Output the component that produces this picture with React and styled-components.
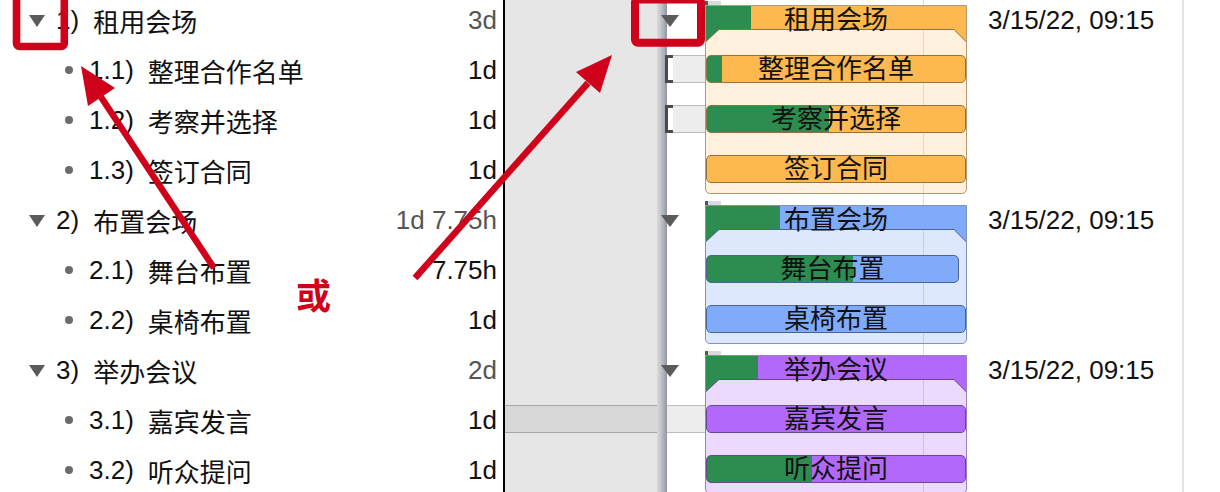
import React from "react";
import styled, { createGlobalStyle } from "styled-components";

const FONT = `"Liberation Sans", "Noto Sans CJK SC", sans-serif`;
const GREEN = "#2d8c4f";
const RED = "#d0021b";

const PALETTE = {
  orange: { bar: "#fdb84f", body: "rgba(253,184,79,0.2)", edge: "#92733f", box: "#b39a70" },
  blue: { bar: "#80abfb", body: "rgba(128,171,251,0.27)", edge: "#4b6390", box: "#7d93bb" },
  purple: { bar: "#b168fb", body: "rgba(177,104,251,0.25)", edge: "#684a8c", box: "#9a7fb8" },
};

const groups = [
  {
    num: "1)", title: "租用会场", dur: "3d", color: "orange", progress: 45, date: "3/15/22, 09:15",
    tasks: [
      { num: "1.1)", title: "整理合作名单", dur: "1d", progress: 15, lead: "bracket" },
      { num: "1.2)", title: "考察并选择", dur: "1d", progress: 122, lead: "bracket" },
      { num: "1.3)", title: "签订合同", dur: "1d", progress: 0 },
    ],
  },
  {
    num: "2)", title: "布置会场", dur: "1d 7.75h", color: "blue", progress: 74, date: "3/15/22, 09:15",
    tasks: [
      { num: "2.1)", title: "舞台布置", dur: "7.75h", progress: 146, width: 253 },
      { num: "2.2)", title: "桌椅布置", dur: "1d", progress: 0 },
    ],
  },
  {
    num: "3)", title: "举办会议", dur: "2d", color: "purple", progress: 52, date: "3/15/22, 09:15",
    tasks: [
      { num: "3.1)", title: "嘉宾发言", dur: "1d", progress: 0, lead: "highlight" },
      { num: "3.2)", title: "听众提问", dur: "1d", progress: 105 },
    ],
  },
];

const GlobalStyle = createGlobalStyle`
  html, body { margin: 0; padding: 0; background: #fff; }
  body { width: 1220px; height: 492px; overflow: hidden; font-family: ${FONT}; }
`;

const Page = styled.div`
  position: relative;
  width: 1220px;
  height: 492px;
  overflow: hidden;
  font-family: ${FONT};
  font-size: 26px;
  color: #111;
`;

const Panes = styled.div`
  display: flex;
  margin-top: -5px;
`;

/* ---------- outline ---------- */
const OutlinePane = styled.div`
  width: 503px;
  flex: none;
  border-right: 2px solid #000;
  display: flex;
  flex-direction: column;
`;

const OutlineRow = styled.div`
  height: 50px;
  display: flex;
  align-items: center;
  padding-left: ${(p) => (p.$child ? 65 : 29)}px;
  padding-right: 6px;
  white-space: nowrap;
`;

const Disclosure = styled.span`
  width: 0;
  height: 0;
  flex: none;
  border-left: 8.5px solid transparent;
  border-right: 8.5px solid transparent;
  border-top: 12px solid #5b5b5b;
  margin-top: 2px;
  margin-right: 11px;
`;

const Bullet = styled.span`
  width: 8px;
  height: 8px;
  flex: none;
  border-radius: 50%;
  background: #6b6b6b;
  margin-right: 16px;
`;

const Num = styled.span`
  margin-right: 14px;
`;

const Title = styled.span``;

const Duration = styled.span`
  margin-left: auto;
  color: ${(p) => (p.$group ? "#555" : "#111")};
`;

/* ---------- splitter ---------- */
const SplitterPane = styled.div`
  width: 162px;
  flex: none;
  display: flex;
  background: #e6e6e6;
`;

const SplitterRows = styled.div`
  flex: 1;
  display: flex;
  flex-direction: column;
`;

const SplitterRow = styled.div`
  height: 50px;
  padding-top: 10px;
  box-sizing: border-box;
`;

const SplitterBand = styled.div`
  height: 28px;
  box-sizing: border-box;
  background: #d8d8d8;
  border-top: 1px solid #a8a8a8;
  border-bottom: 1px solid #a8a8a8;
`;

const SplitterShadow = styled.div`
  width: 10px;
  flex: none;
  background: linear-gradient(to right, #d9dadd 0%, #c3c6cb 35%, #a9aeb5 70%, #90969e 100%);
`;

/* ---------- gantt ---------- */
const GanttPane = styled.div`
  width: 515px;
  flex: none;
  display: flex;
  flex-direction: column;
  background: linear-gradient(
    to right,
    transparent 256px,
    #dcdcdc 256px,
    #dcdcdc 257px,
    transparent 257px
  );
`;

const GroupSection = styled.div`
  display: flex;
  height: ${(p) => p.$rows * 50}px;
`;

const LeadColumn = styled.div`
  width: 38px;
  flex: none;
  display: flex;
  flex-direction: column;
`;

const LeadRow = styled.div`
  height: 50px;
  flex: none;
  box-sizing: border-box;
  padding-top: 10px;
  display: flex;
  align-items: flex-start;
`;

const LeadDisclosure = styled.span`
  width: 0;
  height: 0;
  border-left: 9px solid transparent;
  border-right: 9px solid transparent;
  border-top: 12px solid #5b5b5b;
  margin-left: -6px;
  margin-top: 10px;
`;

const Bracket = styled.span`
  width: 8px;
  height: 28px;
  flex: none;
  box-sizing: border-box;
  border: 3px solid #4a4a4a;
  border-right: none;
  margin-left: -2px;
`;

const LeadBand = styled.span`
  flex: 1;
  height: 28px;
  box-sizing: border-box;
  background: #ededed;
  border-top: 1px solid #bdbdbd;
  border-bottom: 1px solid #bdbdbd;
`;

const BarColumn = styled.div`
  width: 262px;
  flex: none;
  display: flex;
  flex-direction: column;
`;

const GroupTab = styled.div`
  width: 13px;
  height: 4px;
  margin-top: 6px;
  flex: none;
  background: #dadada;
  border-left: 3px solid #555;
`;

const GroupBox = styled.div`
  height: ${(p) => p.$height}px;
  flex: none;
  box-sizing: border-box;
  border: 1px solid ${(p) => p.$c.box};
  border-radius: 0 0 5px 5px;
  background: ${(p) => p.$c.body};
  display: flex;
  flex-direction: column;
`;

const HeaderSlot = styled.div`
  height: 49px;
  flex: none;
  display: grid;
  grid-template-columns: 100%;
  grid-template-rows: 49px;
`;

const HeaderShapeWrap = styled.div`
  grid-area: 1 / 1;
  filter: drop-shadow(0 1px 0 ${(p) => p.$c.edge});
`;

const HeaderShape = styled.div`
  height: 35px;
  clip-path: polygon(0 0, 100% 0, 100% 35px, calc(100% - 12px) 23px, 13px 23px, 0 35px);
  background: linear-gradient(
    to right,
    ${GREEN} ${(p) => p.$progress}px,
    ${(p) => p.$c.bar} ${(p) => p.$progress}px
  );
`;

const HeaderText = styled.div`
  grid-area: 1 / 1;
  position: relative;
  align-self: start;
  height: 27px;
  line-height: 28px;
  text-align: center;
  white-space: nowrap;
`;

const TaskSlot = styled.div`
  height: 50px;
  flex: none;
`;

const TaskBar = styled.div`
  width: ${(p) => p.$width}px;
  height: 28px;
  box-sizing: border-box;
  border: 1px solid ${(p) => p.$c.edge};
  border-radius: 5px;
  background: linear-gradient(
    to right,
    ${GREEN} ${(p) => p.$progress}px,
    ${(p) => p.$c.bar} ${(p) => p.$progress}px
  );
  line-height: 27px;
  text-align: center;
  white-space: nowrap;
`;

const DateColumn = styled.div`
  flex: 1;
  padding-left: 21px;
  line-height: 50px;
  white-space: nowrap;
`;

const RightPane = styled.div`
  flex: 1;
  border-left: 2px solid #e3e3e3;
`;

/* ---------- annotations ---------- */
const Overlay = styled.svg`
  position: absolute;
  left: 0;
  top: 0;
  pointer-events: none;
`;

const OrMark = styled.span`
  position: absolute;
  left: 296px;
  top: 276px;
  font-family: "Noto Sans CJK SC", sans-serif;
  font-size: 35px;
  font-weight: 700;
  line-height: 1;
  color: ${RED};
`;

function Arrow({ tail, base, head }) {
  return (
    <g>
      <line x1={tail[0]} y1={tail[1]} x2={base[0]} y2={base[1]} stroke={RED} strokeWidth="6.5" />
      <polygon points={head.map((p) => p.join(",")).join(" ")} fill={RED} />
    </g>
  );
}

function LeadCell({ kind }) {
  if (kind === "group") {
    return (
      <LeadRow>
        <LeadDisclosure />
      </LeadRow>
    );
  }
  if (kind === "bracket") {
    return (
      <LeadRow>
        <Bracket />
        <LeadBand />
      </LeadRow>
    );
  }
  if (kind === "highlight") {
    return (
      <LeadRow>
        <LeadBand />
      </LeadRow>
    );
  }
  return <LeadRow />;
}

export default function App() {
  const outlineRows = [];
  groups.forEach((g) => {
    outlineRows.push({ ...g, group: true });
    g.tasks.forEach((t) => outlineRows.push(t));
  });

  return (
    <Page>
      <GlobalStyle />
      <Panes>
        <OutlinePane>
          {outlineRows.map((r) => (
            <OutlineRow key={r.num} $child={!r.group}>
              {r.group ? <Disclosure /> : <Bullet />}
              <Num>{r.num}</Num>
              <Title>{r.title}</Title>
              <Duration $group={r.group}>{r.dur}</Duration>
            </OutlineRow>
          ))}
        </OutlinePane>

        <SplitterPane>
          <SplitterRows>
            {outlineRows.map((r) => (
              <SplitterRow key={r.num}>{r.lead === "highlight" && <SplitterBand />}</SplitterRow>
            ))}
          </SplitterRows>
          <SplitterShadow />
        </SplitterPane>

        <GanttPane>
          {groups.map((g) => {
            const c = PALETTE[g.color];
            const rows = g.tasks.length + 1;
            return (
              <GroupSection key={g.num} $rows={rows}>
                <LeadColumn>
                  <LeadCell kind="group" />
                  {g.tasks.map((t) => (
                    <LeadCell key={t.num} kind={t.lead} />
                  ))}
                </LeadColumn>
                <BarColumn>
                  <GroupTab />
                  <GroupBox $c={c} $height={rows * 50 - 11}>
                    <HeaderSlot>
                      <HeaderShapeWrap $c={c}>
                        <HeaderShape $c={c} $progress={g.progress} />
                      </HeaderShapeWrap>
                      <HeaderText>{g.title}</HeaderText>
                    </HeaderSlot>
                    {g.tasks.map((t) => (
                      <TaskSlot key={t.num}>
                        <TaskBar $c={c} $progress={t.progress} $width={t.width || 260}>
                          {t.title}
                        </TaskBar>
                      </TaskSlot>
                    ))}
                  </GroupBox>
                </BarColumn>
                <DateColumn>{g.date}</DateColumn>
              </GroupSection>
            );
          })}
        </GanttPane>

        <RightPane />
      </Panes>

      <Overlay width="1220" height="492" viewBox="0 0 1220 492">
        <rect x="16.5" y="-12" width="47.8" height="58.5" rx="3" fill="none" stroke={RED} strokeWidth="7.6" />
        <rect x="635" y="-0.5" width="66" height="43.2" rx="3" fill="none" stroke={RED} strokeWidth="8" />
        <Arrow tail={[214, 268]} base={[101, 97]} head={[[81, 66], [88, 106], [115, 88]]} />
        <Arrow tail={[415, 278]} base={[588, 83]} head={[[612, 55], [600, 93], [576, 72]]} />
      </Overlay>
      <OrMark>或</OrMark>
    </Page>
  );
}
